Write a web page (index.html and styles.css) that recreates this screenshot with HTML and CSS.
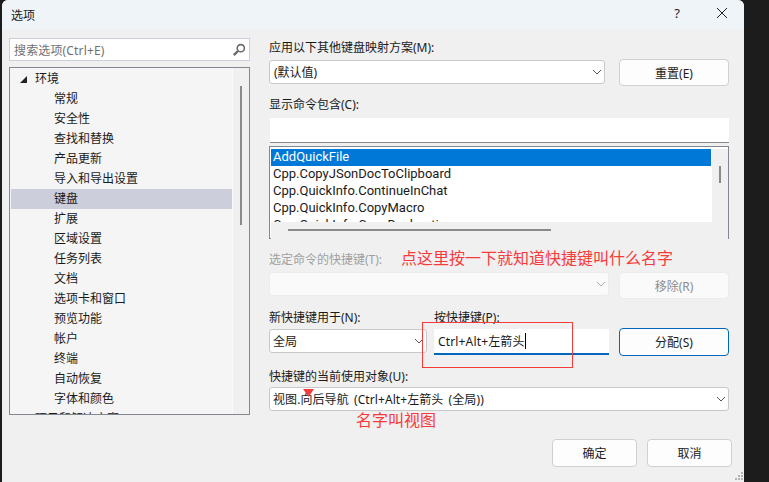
FILE: index.html
```html
<!DOCTYPE html>
<html lang="zh-CN">
<head>
<meta charset="utf-8">
<title>选项</title>
<link rel="stylesheet" href="styles.css">
</head>
<body>
<div class="window">
  <header class="titlebar">
    <span class="title">选项</span>
    <span class="help">?</span>
    <svg class="close" width="12" height="12" viewBox="0 0 12 12"><path d="M1 1 L11 11 M11 1 L1 11" stroke="#222" stroke-width="1" fill="none"/></svg>
  </header>
  <div class="body">
    <aside class="left">
      <div class="search">
        <span class="search-text">搜索选项(Ctrl+E)</span>
        <svg class="search-icon" width="14" height="14" viewBox="0 0 14 14"><circle cx="8.8" cy="5.2" r="3.6" fill="none" stroke="#6a6a6a" stroke-width="1.6"/><path d="M6 8 L1.8 12.2" stroke="#6a6a6a" stroke-width="2.4" fill="none"/></svg>
      </div>
      <div class="tree">
        <div class="tree-list">
          <div class="row root"><svg class="arrow" width="7" height="7" viewBox="0 0 7 7"><path d="M7 0 V7 H0 Z" fill="#222"/></svg>环境</div>
          <div class="row">常规</div>
          <div class="row">安全性</div>
          <div class="row">查找和替换</div>
          <div class="row">产品更新</div>
          <div class="row">导入和导出设置</div>
          <div class="row selected">键盘</div>
          <div class="row">扩展</div>
          <div class="row">区域设置</div>
          <div class="row">任务列表</div>
          <div class="row">文档</div>
          <div class="row">选项卡和窗口</div>
          <div class="row">预览功能</div>
          <div class="row">帐户</div>
          <div class="row">终端</div>
          <div class="row">自动恢复</div>
          <div class="row">字体和颜色</div>
          <div class="row root2">项目和解决方案</div>
        </div>
        <div class="tree-scroll"><div class="tree-thumb"></div></div>
      </div>
    </aside>
    <main class="right">
      <div class="label">应用以下其他键盘映射方案(M):</div>
      <div class="line">
        <div class="combo grow"><span class="paren">(默认值)</span><svg class="chev" width="10" height="6" viewBox="0 0 10 6"><path d="M1 1 L5 5 L9 1" stroke="#555" fill="none"/></svg></div>
        <div class="btn">重置(E)</div>
      </div>
      <div class="label l2">显示命令包含(C):</div>
      <div class="input"></div>
      <div class="cmds">
        <div class="cmd-main">
          <div class="cmd-list">
            <div class="cmd sel">AddQuickFile</div>
            <div class="cmd">Cpp.CopyJSonDocToClipboard</div>
            <div class="cmd">Cpp.QuickInfo.ContinueInChat</div>
            <div class="cmd">Cpp.QuickInfo.CopyMacro</div>
            <div class="cmd">Cpp.QuickInfo.CopyDeclaration</div>
          </div>
          <div class="v-scroll"><div class="v-thumb"></div></div>
        </div>
        <div class="h-scroll"><div class="h-thumb"></div></div>
      </div>
      <div class="label l3 disabled">选定命令的快捷键(T):</div>
      <div class="line l4">
        <div class="combo grow off"><svg class="chev" width="10" height="6" viewBox="0 0 10 6"><path d="M1 1 L5 5 L9 1" stroke="#aaa" fill="none"/></svg></div>
        <div class="btn off">移除(R)</div>
      </div>
      <div class="pair">
        <div class="scope">
          <div class="label">新快捷键用于(N):</div>
          <div class="combo"><span>全局</span><svg class="chev" width="10" height="6" viewBox="0 0 10 6"><path d="M1 1 L5 5 L9 1" stroke="#555" fill="none"/></svg></div>
        </div>
        <div class="keys">
          <div class="label">按快捷键(P):</div>
          <div class="keyinput"><span>Ctrl+Alt+左箭头</span><i class="caret"></i></div>
        </div>
        <div class="btn primary">分配(S)</div>
      </div>
      <div class="label l5">快捷键的当前使用对象(U):</div>
      <div class="combo full"><span>视图.向后导航 (Ctrl+Alt+左箭头 (全局))</span><svg class="chev" width="10" height="6" viewBox="0 0 10 6"><path d="M1 1 L5 5 L9 1" stroke="#555" fill="none"/></svg></div>
      <div class="actions">
        <div class="btn act">确定</div>
        <div class="btn act">取消</div>
      </div>
    </main>
  </div>
  <span class="note note1">点这里按一下就知道快捷键叫什么名字</span>
  <span class="note note2">名字叫视图</span>
  <div class="redbox"></div>
  <svg class="redtri" width="11" height="8" viewBox="0 0 11 8"><path d="M0 0 H11 L5.5 8 Z" fill="#f63b3b"/></svg>
  <svg class="grip" width="11" height="11" viewBox="0 0 11 11"><path d="M8 1h2v2H8z M5 4h2v2H5z M8 4h2v2H8z M2 7h2v2H2z M5 7h2v2H5z M8 7h2v2H8z" fill="#b4b4b4"/></svg>
</div>
</body>
</html>
```
FILE: styles.css
```css
* { box-sizing: border-box; }
html, body { margin: 0; height: 100%; }
body {
  background: #1c1c1c;
  font-family: "Noto Sans", "Noto Sans CJK SC", sans-serif;
  font-size: 12px;
  color: #1a1a1a;
  overflow: hidden;
}
.window {
  position: absolute;
  left: 2px; top: 0;
  width: 742px; height: 482px;
  background: #f0f0f0;
  border-radius: 6px 6px 0 0;
  overflow: hidden;
}
.titlebar {
  height: 29px;
  background: #eff4f9;
  display: flex;
  align-items: center;
  padding-left: 9px;
}
.help { margin-left: auto; margin-right: 36px; font-size: 13px; margin-top: -3px; }
.close { margin-right: 16px; margin-top: -3px; }
.body { display: flex; }
.left { width: 248px; padding: 9px 0 0 7px; flex: none; }
.search {
  width: 241px; height: 23px;
  background: #fff;
  border: 1px solid #cccedb;
  display: flex; align-items: center;
  padding: 0 3px 0 4px;
  justify-content: space-between;
}
.search-text { color: #717171; letter-spacing: 0.15px; }
.tree {
  margin-top: 6px;
  width: 241px;
  height: 348px;
  border: 1px solid #828790;
  background: #f5f5f5;
  display: flex;
  overflow: hidden;
}
.tree-list { flex: 1; padding: 1px 0 0 1px; }
.row { height: 20px; line-height: 20px; padding-left: 43px; white-space: nowrap; }
.root { padding-left: 9px; display: flex; align-items: center; }
.root2 { padding-left: 24px; }
.arrow { margin-right: 8px; }
.selected { background: #cccedb; }
.tree-scroll { width: 17px; background: #f0f0f0; border-left: 1px solid #fafafa; flex: none; }
.tree-thumb { width: 2px; height: 139px; background: #8a8a8a; margin: 18px 0 0 7px; }
.right { width: 460px; margin-left: 19px; padding-top: 11px; flex: none; }
.label { height: 16px; line-height: 16px; white-space: nowrap; }
.l2 { margin-top: 11px; }
.line { display: flex; margin-top: 3px; gap: 14px; align-items: flex-start; }
.combo {
  height: 24px;
  background: #fff;
  border: 1px solid #c8c8c8;
  border-radius: 3px;
  display: flex; align-items: center; justify-content: space-between;
  padding: 0 2px 0 3px;
}
.chev { margin-left: auto; }
.paren { margin-left: 1px; }
.grow { flex: 1; margin-top: 1px; }
.btn {
  width: 110px; height: 27px;
  border: 1px solid #d0d0d0;
  border-radius: 4px;
  background: #fdfdfd;
  display: flex; align-items: center; justify-content: center;
}
.input {
  margin: 5px 0 0 1px;
  height: 25px;
  background: #fff;
  border-bottom: 1px solid #8a8a8a;
}
.cmds {
  margin-top: 3px;
  height: 93px;
  border: 1px solid #828790;
  background: #fff;
  padding: 2px 0 0 1px;
}
.cmd-main { display: flex; height: 73px; overflow: hidden; }
.cmd-list { flex: 1; padding-right: 1px; }
.cmd { height: 17px; line-height: 16px; padding-left: 2px; font-family: Roboto, sans-serif; font-size: 13px; white-space: nowrap; }
.sel { background: #0078d7; color: #fff; }
.v-scroll { width: 16px; background: #f0f0f0; flex: none; }
.v-thumb { width: 2px; height: 17px; background: #8a8a8a; margin: 17px 0 0 7px; }
.h-scroll { height: 17px; background: #f0f0f0; padding-top: 7px; }
.h-thumb { width: 263px; height: 2px; background: #8a8a8a; margin-left: 17px; }
.l3 { margin-top: 13px; }
.disabled { color: #a0a0a0; }
.l4 { margin-top: 4px; gap: 10px; }
.off { background: #fafafa; border-color: #ececec; color: #8c8c8c; }
.combo.off { margin-top: 0; }
.pair { display: flex; margin-top: 11px; align-items: flex-start; }
.scope { width: 158px; flex: none; }
.scope .combo { margin-top: 3px; }
.keys { width: 175px; margin-left: 7px; flex: none; }
.keyinput {
  margin-top: 3px;
  height: 26px; width: 175px;
  background: #fff;
  border-bottom: 2px solid #0067c0;
  display: flex; align-items: center; padding-left: 4px;
  letter-spacing: 0.15px;
}
.caret { width: 1px; height: 16px; background: #000; }
.primary { border-color: #0067c0; margin: 18px 0 0 10px; height: 28px; flex: none; }
.l5 { margin-top: 13px; }
.full { margin-top: 2px; word-spacing: 2px; letter-spacing: 0.08px; }
.actions { display: flex; justify-content: flex-end; gap: 10px; margin-top: 28px; margin-right: -3px; }
.act { width: 85px; height: 28px; }
.note { position: absolute; color: #f63b3b; line-height: 18px; font-size: 16px; white-space: nowrap; }
.note1 { left: 399px; top: 249px; }
.note2 { left: 354px; top: 411px; }
.redbox { position: absolute; left: 420px; top: 322px; width: 151px; height: 46px; border: 1px solid #f63b3b; }
.redtri { position: absolute; left: 301px; top: 389px; }
.grip { position: absolute; right: 0; bottom: 0; }
```
